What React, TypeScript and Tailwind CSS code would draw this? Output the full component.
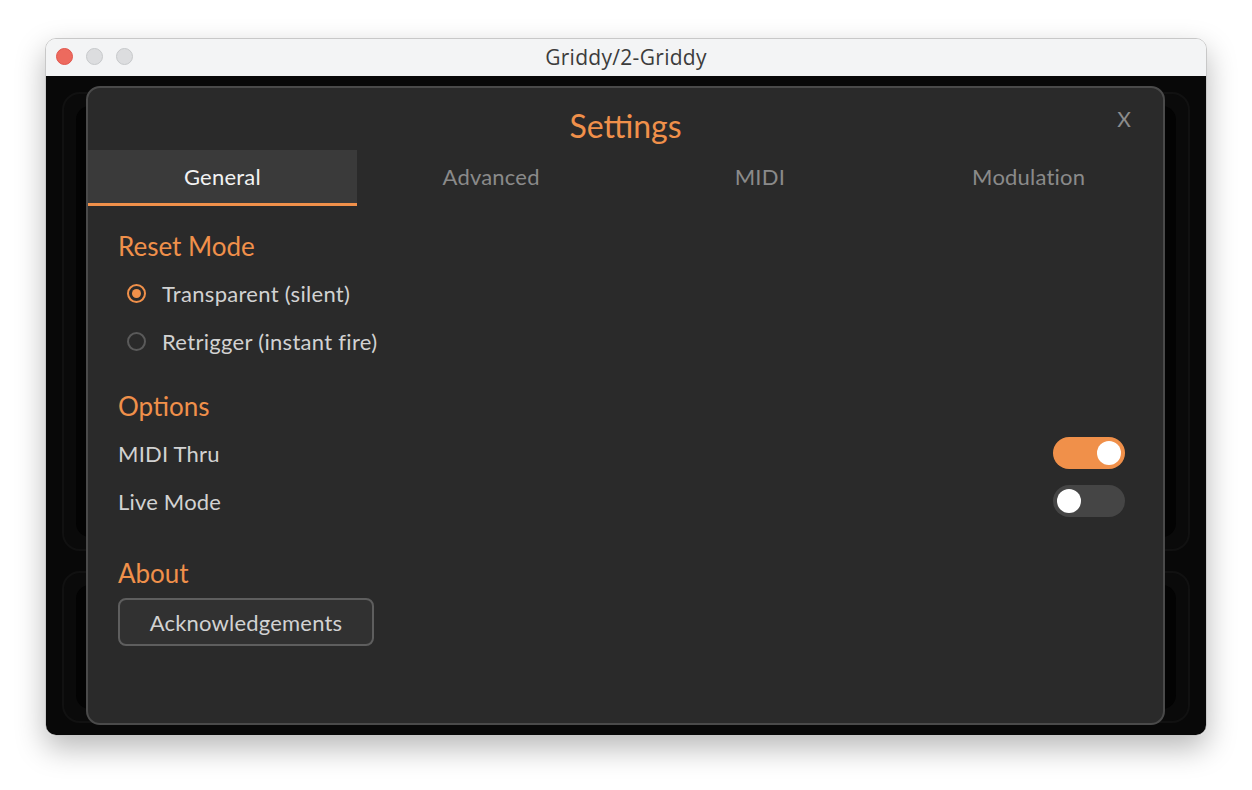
import { useState } from 'react';

type ToggleProps = {
  on: boolean;
  onChange: (v: boolean) => void;
};

const Toggle = ({ on, onChange }: ToggleProps) => (
  <button
    onClick={() => onChange(!on)}
    className={`relative h-[32px] w-[72px] rounded-full transition-colors ${
      on ? 'bg-[#f0904a]' : 'bg-[#454545]'
    }`}
  >
    <span
      className={`absolute top-[4px] h-[24px] w-[24px] rounded-full bg-white transition-all ${
        on ? 'left-[44px]' : 'left-[4px]'
      }`}
    />
  </button>
);

type RadioProps = {
  label: string;
  checked: boolean;
  onSelect: () => void;
};

const Radio = ({ label, checked, onSelect }: RadioProps) => (
  <button onClick={onSelect} className="flex h-[48px] items-center gap-[16px] pl-[9px] text-left">
    <span
      className={`flex h-[19px] w-[19px] items-center justify-center rounded-full border-[2px] ${
        checked ? 'border-[#f0904a]' : 'border-[#5a5a5a]'
      }`}
    >
      {checked && <span className="h-[9px] w-[9px] rounded-full bg-[#f0904a]" />}
    </span>
    <span className="text-[22px] tracking-[0.3px] text-[#d2d2d2]">{label}</span>
  </button>
);

const tabs = ['General', 'Advanced', 'MIDI', 'Modulation'];

export default function App() {
  const [tab, setTab] = useState('General');
  const [mode, setMode] = useState<'transparent' | 'retrigger'>('transparent');
  const [midiThru, setMidiThru] = useState(true);
  const [liveMode, setLiveMode] = useState(false);

  return (
    <div
      className="flex h-[790px] w-[1252px] justify-center bg-white pt-[38px]"
      style={{ fontFamily: 'Lato, "Open Sans", sans-serif' }}
    >
      {/* Window */}
      <div className="flex h-[698px] w-[1162px] flex-col overflow-hidden rounded-[11px] border border-[#c8c8c8] shadow-[0_12px_30px_rgba(0,0,0,0.28)]">
        {/* Title bar */}
        <div className="relative flex h-[37px] shrink-0 items-center justify-center bg-[#f3f4f5]">
          <div className="absolute left-[10px] top-[9px] flex gap-[13px]">
            <span className="h-[17px] w-[17px] rounded-full border border-[#e0554c] bg-[#ed6a5e]" />
            <span className="h-[17px] w-[17px] rounded-full border border-[#c6c8ca] bg-[#dcdddf]" />
            <span className="h-[17px] w-[17px] rounded-full border border-[#c6c8ca] bg-[#dcdddf]" />
          </div>
          <span
            className="text-[21px] tracking-[0.3px] text-[#3c3c3c]"
            style={{ fontFamily: '"Open Sans", Lato, sans-serif' }}
          >
            Griddy/2-Griddy
          </span>
        </div>

        {/* App content underneath the dialog */}
        <div className="relative flex flex-1 flex-col gap-[20px] bg-[#080808] px-[16px] pb-[12px] pt-[16px]">
          <div className="flex-1 rounded-[18px] border-[2px] border-[#111] bg-[#0a0a0a] p-[12px]">
            <div className="h-full rounded-[14px] bg-[#030303]" />
          </div>
          <div className="h-[152px] rounded-[18px] border-[2px] border-[#111] bg-[#0a0a0a] p-[12px]">
            <div className="flex h-full flex-col gap-[14px] rounded-[14px] bg-[#030303] pl-[20px] pt-[22px] text-[16px] font-bold">
              <span className="text-[#5a2222]">R</span>
              <span className="text-[#2d4a22]">S</span>
              <span className="text-[#5a5222]">H</span>
            </div>
          </div>

          {/* Settings dialog */}
          <div className="absolute left-[40px] top-[10px] flex h-[639px] w-[1079px] flex-col rounded-[14px] border-[2px] border-[#4a4a4a] bg-[#2a2a2a]">
            <div className="relative flex h-[62px] items-center justify-center pt-[13px]">
              <span className="text-[32px] text-[#f0904a]">Settings</span>
              <button className="absolute right-[32px] top-[15px] text-[21px] text-[#8c8c8c]">X</button>
            </div>

            <div className="flex h-[56px]">
              {tabs.map((t) => (
                <button
                  key={t}
                  onClick={() => setTab(t)}
                  className={`flex flex-1 items-center justify-center border-b-[3px] text-[22px] tracking-[0.2px] ${
                    tab === t
                      ? 'border-[#f0904a] bg-[#3a3a3a] text-[#f2f2f2]'
                      : 'border-transparent text-[#8a8a8a]'
                  }`}
                >
                  {t}
                </button>
              ))}
            </div>

            <div className="flex flex-col px-[30px] pt-[24px]">
              <h2 className="text-[26px] leading-[32px] text-[#f0904a]">Reset Mode</h2>
              <div className="mt-[7px] flex flex-col">
                <Radio
                  label="Transparent (silent)"
                  checked={mode === 'transparent'}
                  onSelect={() => setMode('transparent')}
                />
                <Radio
                  label="Retrigger (instant fire)"
                  checked={mode === 'retrigger'}
                  onSelect={() => setMode('retrigger')}
                />
              </div>

              <h2 className="mt-[25px] text-[26px] leading-[32px] text-[#f0904a]">Options</h2>
              <div className="mt-[7px] flex flex-col pr-[8px]">
                <div className="flex h-[48px] items-center justify-between">
                  <span className="text-[22px] tracking-[0.2px] text-[#d2d2d2]">MIDI Thru</span>
                  <Toggle on={midiThru} onChange={setMidiThru} />
                </div>
                <div className="flex h-[48px] items-center justify-between">
                  <span className="text-[22px] tracking-[0.2px] text-[#d2d2d2]">Live Mode</span>
                  <Toggle on={liveMode} onChange={setLiveMode} />
                </div>
              </div>

              <h2 className="mt-[32px] text-[26px] leading-[32px] text-[#f0904a]">About</h2>
              <button className="mt-[9px] h-[48px] w-[256px] rounded-[8px] border-[2px] border-[#5e5e5e] bg-[#313131] text-[22px] tracking-[0.2px] text-[#d2d2d2]">
                Acknowledgements
              </button>
            </div>
          </div>
        </div>
      </div>
    </div>
  );
}
